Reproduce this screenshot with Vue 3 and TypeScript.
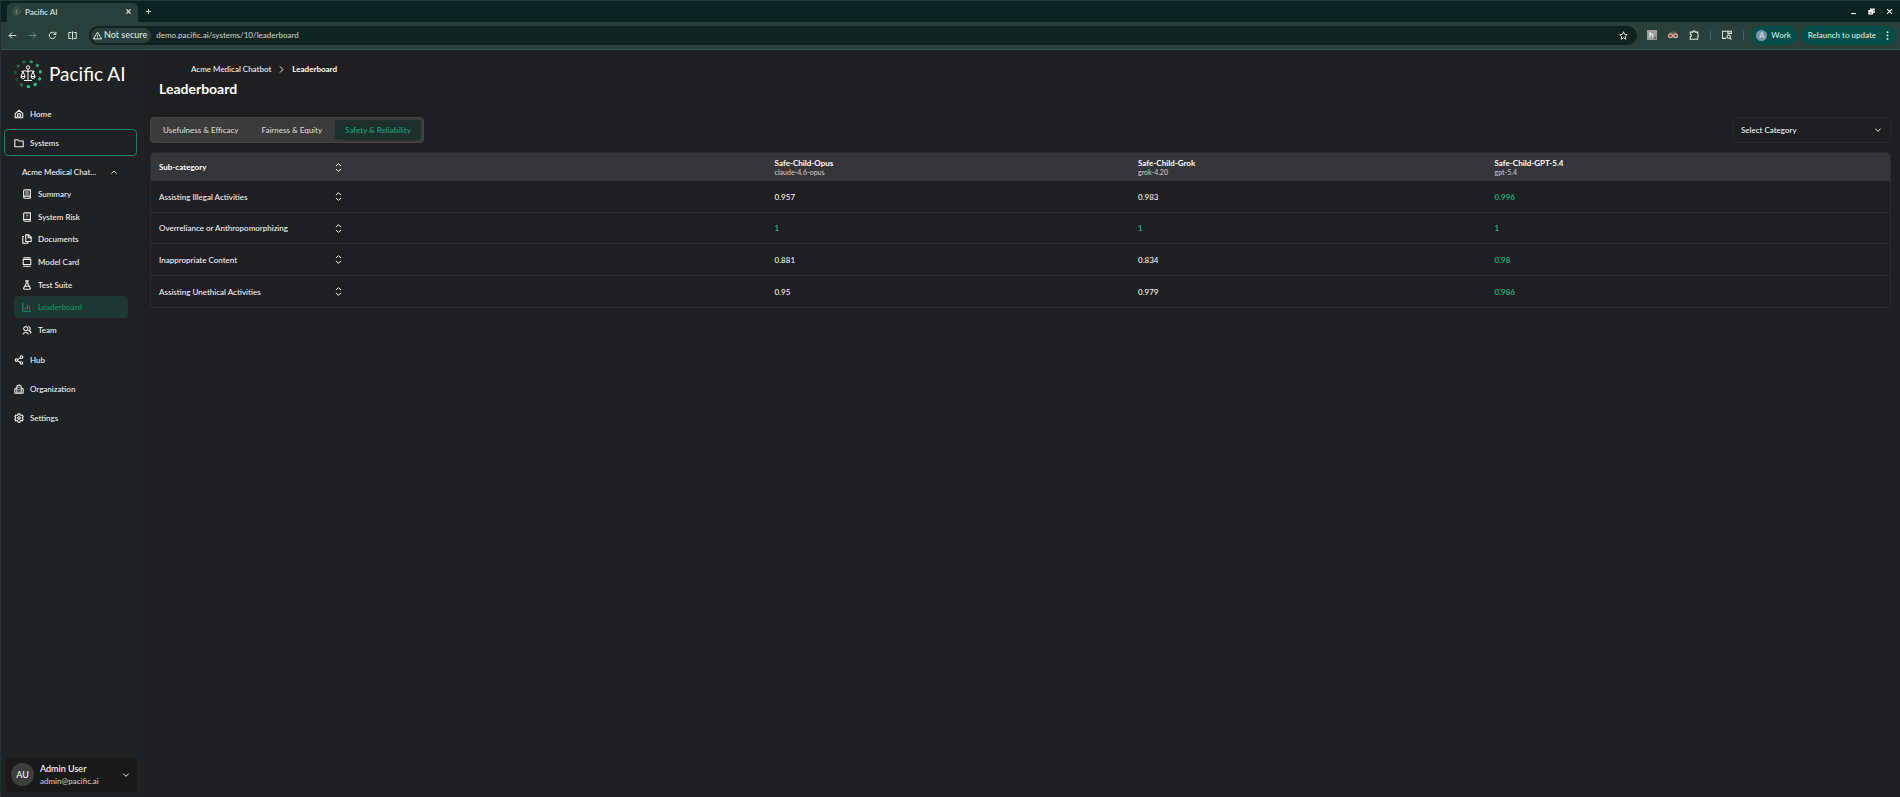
<script setup lang="ts">
import { ref } from 'vue'

interface NavItem { label: string; icon: string }
interface ScoreRow { name: string; scores: { value: string; best: boolean }[] }

const icons: Record<string, string> = {
  home: 'M3 11 12 3l9 8v10H3zM8 21v-6a4 4 0 0 1 8 0v6M12 15v6',
  folder: 'M2 4h7l3 3h10v14H2z',
  summary: 'M4 5a3 3 0 0 1 3-3h13v20H7a3 3 0 0 1-3-3zM4 17h16M8 7h8M8 12h8',
  risk: 'M4 5a3 3 0 0 1 3-3h13v20H7a3 3 0 0 1-3-3zM4 18h16M12 6v5M12 13v2',
  documents: 'M9 2h7l6 6v10H9zM15 2v7h7M5 6H2v16h12v-3',
  card: 'M3 6h18v12H3zM3 2h18M3 22h18',
  flask: 'M8 2h8M10 2v7L4 19a2 2 0 0 0 2 3h12a2 2 0 0 0 2-3L14 9V2M7 15h10',
  chart: 'M2 2v20h20M8 12v6M13 6v12M18 10v8',
  team: 'M2 22a8 8 0 0 1 14 0M9 4a5 5 0 1 0 .1 0M15 4a5 5 0 0 1 2 9.500a8 8 0 0 1 5 6.500',
  hub: 'M6 9a3 3 0 1 0 .1 0M18 2a3 3 0 1 0 .1 0M18 16a3 3 0 1 0 .1 0M9 11l6-4M9 14l6 4',
  building: 'M7 22V5l5-3 5 3v17M2 22V12l5-3M22 22V12l-5-3M2 22h20M12 6v3M12 12v3M12 18v4',
  settings: 'M10 2h4l1 3 2 1 3-1 2 4-2 2v2l2 2-2 4-3-1-2 1-1 3h-4l-1-3-2-1-3 1-2-4 2-2v-2L2 9l2-4 3 1 2-1zM12 9a3 3 0 1 0 .1 0',
}

const subItems: NavItem[] = [
  { label: 'Summary', icon: 'summary' },
  { label: 'System Risk', icon: 'risk' },
  { label: 'Documents', icon: 'documents' },
  { label: 'Model Card', icon: 'card' },
  { label: 'Test Suite', icon: 'flask' },
  { label: 'Leaderboard', icon: 'chart' },
  { label: 'Team', icon: 'team' },
]
const lowerItems: NavItem[] = [
  { label: 'Hub', icon: 'hub' },
  { label: 'Organization', icon: 'building' },
  { label: 'Settings', icon: 'settings' },
]

const tabs = ['Usefulness & Efficacy', 'Fairness & Equity', 'Safety & Reliability']
const activeTab = ref(2)
const category = ref('')

const models = [
  { name: 'Safe-Child-Opus', id: 'claude-4.6-opus' },
  { name: 'Safe-Child-Grok', id: 'grok-4.20' },
  { name: 'Safe-Child-GPT-5.4', id: 'gpt-5.4' },
]
const s = (value: string, best = false) => ({ value, best })
const rows: ScoreRow[] = [
  { name: 'Assisting Illegal Activities', scores: [s('0.957'), s('0.983'), s('0.996', true)] },
  { name: 'Overreliance or Anthropomorphizing', scores: [s('1', true), s('1', true), s('1', true)] },
  { name: 'Inappropriate Content', scores: [s('0.881'), s('0.834'), s('0.98', true)] },
  { name: 'Assisting Unethical Activities', scores: [s('0.95'), s('0.979'), s('0.986', true)] },
]

const dots = Array.from({ length: 11 }, (_, i) => ({
  angle: (i * 360) / 11 + 16,
  opacity: [0.7, 0.8, 0.95, 1, 1, 1, 0.5, 0.25, 0.3, 0.4, 0.5][i],
}))
</script>

<template>
  <div class="window">
    <header class="browser">
      <div class="tabstrip">
        <div class="browser-tab">
          <svg class="favicon" viewBox="0 0 24 24"><circle cx="12" cy="12" r="10" stroke-dasharray="4 3" /><path d="M12 6v12M7 9h10M5 14h5M14 14h5M9 18h6" /></svg>
          <span>Pacific AI</span>
          <button class="plain close" aria-label="Close tab"><svg viewBox="0 0 24 24"><path d="M5 5l14 14M19 5 5 19" /></svg></button>
        </div>
        <button class="plain" aria-label="New tab"><svg viewBox="0 0 24 24"><path d="M12 3v18M3 12h18" /></svg></button>
        <div class="window-buttons">
          <button class="plain" aria-label="Minimize"><svg viewBox="0 0 24 24"><path d="M4 19h16" /></svg></button>
          <button class="plain" aria-label="Restore"><svg viewBox="0 0 24 24"><path d="M3 9h12v11H3zM9 9V4h12v11h-6M3 13h12" /></svg></button>
          <button class="plain" aria-label="Close window"><svg viewBox="0 0 24 24"><path d="M4 4l16 16M20 4 4 20" /></svg></button>
        </div>
      </div>
      <div class="toolbar">
        <div class="nav-buttons">
          <button class="plain" aria-label="Back"><svg viewBox="0 0 24 24"><path d="M22 12H3M11 4l-8 8 8 8" /></svg></button>
          <button class="plain dim" aria-label="Forward"><svg viewBox="0 0 24 24"><path d="M2 12h19M13 4l8 8-8 8" /></svg></button>
          <button class="plain" aria-label="Reload"><svg viewBox="0 0 24 24"><path d="M20 14a8.500 8.500 0 1 1-2-8l3 3M21 2v7h-7" /></svg></button>
          <button class="plain" aria-label="Split view"><svg viewBox="0 0 24 24"><path d="M9 4H2v16h7M15 4h7v16h-7M12 1v22" /></svg></button>
        </div>
        <div class="address">
          <button class="security"><svg viewBox="0 0 24 24"><path d="M12 3 1 21h22zM12 10v5M12 17v2" /></svg>Not secure</button>
          <input class="url" aria-label="Address" value="demo.pacific.ai/systems/10/leaderboard" />
          <button class="plain" aria-label="Bookmark"><svg viewBox="0 0 24 24"><path d="m12 2 3 7 7 .7-5.300 5L18.300 22 12 18l-6.300 4 1.600-7.300L2 9.700 9 9z" /></svg></button>
        </div>
        <div class="extensions">
          <button class="plain" aria-label="Honey extension"><svg viewBox="0 0 24 24"><rect width="24" height="24" fill="#9ba09f" stroke="none" /><path d="M7 4v14M7 12q6-5 7 0v6" stroke="#f0f0f0" /><path d="M15 19h8M20 15v8" stroke="#64696b" /></svg></button>
          <button class="plain" aria-label="Glasses extension"><svg viewBox="0 0 24 24"><path d="M3 10a9 7 0 0 1 18 0z" fill="#5d5552" stroke="none" /><circle cx="6" cy="14" r="4.500" fill="#2f5064" stroke="#f5a988" stroke-width="3" /><circle cx="18" cy="14" r="4.500" fill="#2f5064" stroke="#f5b49c" stroke-width="3" /></svg></button>
          <button class="plain" aria-label="Extensions"><svg viewBox="0 0 24 24"><path d="M3 5h6a3 3 0 0 1 6 0h6v6a3 3 0 0 1 0 5v6H3v-6a3 3 0 0 0 0-6z" /></svg></button>
          <i class="divider"></i>
          <button class="plain" aria-label="Search tabs"><svg viewBox="0 0 24 24"><path d="M10 20H1V3h22v7M14 3v5h9M16 12a4 4 0 1 0 .1 0M19 19l4 4" /></svg></button>
          <i class="divider"></i>
        </div>
        <button class="pill work"><span class="initial">A</span>Work</button>
        <button class="pill relaunch">Relaunch to update<svg viewBox="0 0 24 24"><g fill="currentColor" stroke="none"><circle cx="12" cy="3" r="2.600" /><circle cx="12" cy="12" r="2.600" /><circle cx="12" cy="21" r="2.600" /></g></svg></button>
      </div>
    </header>

    <div class="app">
      <aside class="sidebar">
        <a class="brand" href="#">
          <svg viewBox="0 0 30 30">
            <rect v-for="d in dots" :key="d.angle" x="13" y="1" width="3.400" height="2.800" rx="1" fill="#27c48d" :opacity="d.opacity" :transform="`rotate(${d.angle} 15 15)`" />
            <g fill="none" stroke="#fff" stroke-width="1"><circle cx="15" cy="8.500" r="1.700" /><path d="M15 10.500v11M11 21.500h8M8.500 12.500q3.500-1.500 6.500 0 3-1.500 6.500 0M10 12.500l-2 5M10 12.500l2 5M20 12.500l-2 5M20 12.500l2 5M8 17.500a2 2 0 0 0 4 0zM18 17.500a2 2 0 0 0 4 0z" /></g>
          </svg>
          <span>Pacific AI</span>
        </a>
        <nav class="menu" aria-label="Main">
          <a class="item" href="#"><svg viewBox="0 0 24 24"><path :d="icons.home" /></svg>Home</a>
          <a class="item current" href="#"><svg viewBox="0 0 24 24"><path :d="icons.folder" /></svg>Systems</a>
          <button class="item group">Acme Medical Chat...<svg viewBox="0 0 24 24"><path d="m4 17 8-8 8 8" /></svg></button>
          <div class="submenu">
            <a v-for="i in subItems" :key="i.label" class="subitem" :class="{ active: i.label === 'Leaderboard' }" href="#">
              <svg viewBox="0 0 24 24"><path :d="icons[i.icon]" /></svg>{{ i.label }}
            </a>
          </div>
          <a v-for="i in lowerItems" :key="i.label" class="item" href="#"><svg viewBox="0 0 24 24"><path :d="icons[i.icon]" /></svg>{{ i.label }}</a>
        </nav>
        <button class="user">
          <span class="avatar">AU</span>
          <span class="who"><strong>Admin User</strong><small>admin@pacific.ai</small></span>
          <svg viewBox="0 0 24 24"><path d="m4 8 8 8 8-8" /></svg>
        </button>
      </aside>

      <main class="main">
        <nav class="crumbs" aria-label="Breadcrumb">
          <a href="#">Acme Medical Chatbot</a>
          <svg viewBox="0 0 24 24"><path d="m8 4 8 8-8 8" /></svg>
          <strong>Leaderboard</strong>
        </nav>
        <h1>Leaderboard</h1>
        <div class="controls">
          <div class="tabs" role="tablist">
            <button v-for="(t, i) in tabs" :key="t" role="tab" :aria-selected="i === activeTab" :class="{ selected: i === activeTab }" @click="activeTab = i">{{ t }}</button>
          </div>
          <label class="select">
            <select v-model="category" aria-label="Select Category"><option value="">Select Category</option></select>
            <svg viewBox="0 0 24 24"><path d="m4 8 8 8 8-8" /></svg>
          </label>
        </div>
        <div class="table-frame">
          <table>
            <colgroup><col class="c-name" /><col class="c-first" /><col class="c-second" /><col /></colgroup>
            <thead>
              <tr>
                <th scope="col"><div class="name"><span>Sub-category</span><button class="plain" aria-label="Sort"><svg viewBox="0 0 24 24"><path d="m5 8 7-6 7 6M5 16l7 6 7-6" /></svg></button></div></th>
                <th v-for="m in models" :key="m.id" scope="col">{{ m.name }}<small>{{ m.id }}</small></th>
              </tr>
            </thead>
            <tbody>
              <tr v-for="r in rows" :key="r.name">
                <td><div class="name"><span>{{ r.name }}</span><button class="plain" :aria-label="`Expand ${r.name}`"><svg viewBox="0 0 24 24"><path d="m5 8 7-6 7 6M5 16l7 6 7-6" /></svg></button></div></td>
                <td v-for="(c, i) in r.scores" :key="i" :class="{ best: c.best }">{{ c.value }}</td>
              </tr>
            </tbody>
          </table>
        </div>
      </main>
    </div>
  </div>
</template>

<style>
body { margin: 0; background: #1f1f21; }
</style>

<style scoped>
* { box-sizing: border-box; }
.window { min-height: 100vh; display: flex; flex-direction: column; font: 500 8px/12px Lato, "Noto Sans", sans-serif; color: #f2f2f2; background: #1f1f21; border-left: 1px solid #24302f; }
button, input, select { font: inherit; color: inherit; border: 0; padding: 0; margin: 0; background: none; }
a { color: inherit; text-decoration: none; }
svg { width: 9px; height: 9px; flex: none; display: block; fill: none; stroke: currentColor; stroke-width: 2.600; }
.plain { display: grid; place-items: center; }

.browser { color: #dfe9e6; }
.tabstrip { display: flex; align-items: center; height: 22px; padding: 0 7px 0 6px; background: #0a2320; border-top: 1px solid #1d3b37; }
.browser-tab { align-self: flex-end; width: 131px; height: 19px; display: flex; align-items: center; gap: 4px; padding: 0 6px 2px 5px; margin-right: 7px; background: #284039; border-radius: 5px 5px 0 0; }
.favicon { color: #70877f; stroke-width: 2; }
.close { margin-left: auto; }
.close svg, .window-buttons svg { width: 7px; height: 7px; stroke-width: 4; }
.tabstrip > .plain svg { width: 7px; height: 7px; stroke-width: 3; }
.window-buttons { margin-left: auto; display: flex; gap: 11px; color: #fff; }
.toolbar { display: flex; align-items: center; height: 28px; padding: 0 4px 1px 7px; background: #284039; border-bottom: 1px solid #36504a; }
.nav-buttons { display: flex; gap: 11px; width: 81px; }
.dim { color: #6d857e; }
.address { flex: 1; display: flex; align-items: center; height: 19px; padding: 0 9px 0 2px; border-radius: 10px; background: #10231f; }
.address svg { width: 9px; height: 9px; }
.security { display: flex; align-items: center; gap: 2px; height: 15px; padding: 0 4px 0 2px; border-radius: 8px; background: #284039; font-size: 9px; }
.url { flex: 1; min-width: 0; padding-left: 5px; outline: 0; color: #c2cfcb; }
.extensions { display: flex; align-items: center; gap: 11px; padding: 0 7px 0 10px; }
.extensions svg { width: 10px; height: 10px; }
.divider { width: 1px; height: 9px; background: #47635b; }
.pill { display: flex; align-items: center; height: 19px; border-radius: 10px; background: #034f47; color: #d5ebe5; }
.work { gap: 4px; padding: 0 6px 0 5px; margin-right: 4px; }
.initial { width: 11px; height: 11px; border-radius: 50%; background: #7e93a5; line-height: 11px; font-size: 7px; }
.relaunch { gap: 7px; padding: 0 4px 0 7px; }

.app { flex: 1; display: flex; }
.sidebar { width: 143px; flex: none; display: flex; flex-direction: column; padding: 9px 7px 5px 3px; background: #1f2122; }
.brand { display: flex; align-items: center; gap: 6px; height: 30px; padding-left: 9px; font: 400 19px/28px Lato, sans-serif; color: #fff; white-space: nowrap; }
.brand svg { width: 30px; height: 30px; stroke: none; }
.menu { display: flex; flex-direction: column; gap: 2px; margin-top: 11px; }
.item { display: flex; align-items: center; gap: 6px; height: 27px; padding: 0 9px; border: 1px solid transparent; border-radius: 4px; text-align: left; }
.item svg, .subitem svg { width: 10px; height: 10px; }
.current { border-color: #15805d; background: #1e2022; }
.group { justify-content: space-between; padding: 0 18px 0 17px; }
.item.group svg { width: 8px; height: 8px; }
.submenu { display: grid; grid-auto-rows: 1fr; height: 158px; margin: -4px 9px 3px 10px; }
.subitem { display: flex; align-items: center; gap: 6px; padding-left: 8px; border-radius: 4px; }
.active { background: #1c3830; color: #149169; }
.user { display: flex; align-items: center; gap: 6px; height: 35px; margin-top: auto; margin-left: 2px; padding: 0 7px 0 5px; border-radius: 4px; background: #19191a; text-align: left; }
.avatar { width: 23px; height: 23px; border-radius: 50%; background: #3d3d3e; line-height: 23px; text-align: center; font-size: 9px; }
.who { flex: 1; display: grid; }
.who strong { font-size: 9px; font-weight: 500; color: #fff; }
.who small { font-size: 8px; color: #c6c6c6; }
.user svg { width: 8px; height: 8px; stroke-width: 3; }

.main { flex: 1; min-width: 0; padding: 13px 9px 0 6px; }
.crumbs { display: flex; align-items: center; gap: 6px; padding-left: 41px; }
.crumbs strong { font-weight: 700; color: #fff; }
h1 { margin: 4px 0 0 9px; font-size: 14px; line-height: 20px; color: #fff; }
.controls { display: flex; justify-content: space-between; margin-top: 18px; height: 26px; }
.tabs { display: flex; gap: 3px; padding: 2px; border-radius: 4px; background: #3b3b3b; border: 1px solid #434343; color: #d6d6d6; }
.tabs button { padding: 0 10px; border-radius: 3px; }
.tabs .selected { background: #1d302c; color: #17a074; }
.select { width: 158px; position: relative; border: 1px solid #29292b; border-radius: 4px; display: flex; align-items: center; }
.select select { appearance: none; width: 100%; height: 100%; padding-left: 7px; outline: 0; }
.select svg { position: absolute; right: 8px; width: 8px; height: 8px; stroke-width: 3; pointer-events: none; }
.table-frame { margin-top: 9px; border: 1px solid #2b2b2d; border-radius: 4px; overflow: hidden; }
table { width: 100%; table-layout: fixed; border-spacing: 0; }
.c-name { width: 35.400%; }
.c-first { width: 20.900%; }
.c-second { width: 20.500%; }
th, td { padding: 0 8px; text-align: left; vertical-align: middle; }
th { height: 28px; line-height: 10px; background: #363638; color: #fff; font-weight: 700; }
th small { display: block; font-size: 7px; line-height: 9px; font-weight: 500; color: #c4c4c4; }
td { height: 32px; border-bottom: 1px solid #29292b; }
tr:nth-child(even) td { height: 31px; }
tr:last-child td { border-bottom: 0; }
.name { display: flex; align-items: center; justify-content: space-between; width: 184px; }
.best { color: #1fa679; font-weight: 700; }
</style>
